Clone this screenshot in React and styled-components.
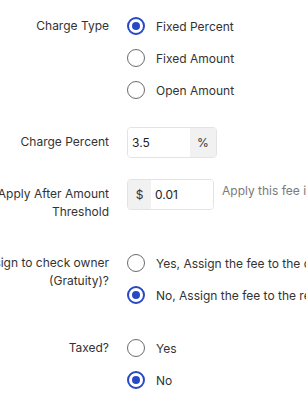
import React from "react";
import styled, { createGlobalStyle } from "styled-components";

const GlobalStyle = createGlobalStyle`
  html, body {
    margin: 0;
    padding: 0;
    background: #ffffff;
    overflow: hidden;
  }
  body {
    font-family: "Inter", "Liberation Sans", sans-serif;
    color: #333333;
  }
`;

const Form = styled.div`
  width: 400px;
  margin-left: -31px;
  padding-top: 10px;
`;

const Group = styled.div`
  display: flex;
  align-items: flex-start;
  margin-bottom: ${(p) => p.$gap || 21}px;
`;

const Label = styled.div`
  width: 140px;
  flex-shrink: 0;
  text-align: right;
  font-size: 12px;
  line-height: 18px;
  padding-top: ${(p) => p.$top || 7}px;
  margin-right: 18px;
  color: #333333;
`;

const Options = styled.div`
  display: flex;
  flex-direction: column;
`;

const Option = styled.label`
  display: flex;
  align-items: center;
  height: 32px;
  white-space: nowrap;
  font-size: 12px;
  color: #333333;
`;

const Ring = styled.span`
  width: 18px;
  height: 18px;
  box-sizing: border-box;
  border-radius: 50%;
  border: ${(p) => (p.$on ? "2px solid #2849c3" : "1.5px solid #6b6b6b")};
  display: flex;
  align-items: center;
  justify-content: center;
  margin-right: 11px;
  flex-shrink: 0;

  &::after {
    content: "";
    display: ${(p) => (p.$on ? "block" : "none")};
    width: 8px;
    height: 8px;
    border-radius: 50%;
    background: #2849c3;
  }
`;

const Field = styled.div`
  display: flex;
  align-items: flex-start;
  white-space: nowrap;
`;

const InputBox = styled.div`
  display: flex;
  height: 31px;
  box-sizing: border-box;
  border: 1px solid #e3e3e3;
  border-radius: 4px;
  overflow: hidden;
  font-size: 12px;
`;

const Value = styled.div`
  width: ${(p) => p.$w}px;
  box-sizing: border-box;
  display: flex;
  align-items: center;
  padding-left: 4px;
  background: #ffffff;
  color: #222222;
`;

const Addon = styled.div`
  width: ${(p) => p.$w}px;
  display: flex;
  align-items: center;
  justify-content: center;
  background: #f1f1f1;
  color: #333333;
`;

const Help = styled.div`
  margin-left: 8px;
  padding-top: 3px;
  font-size: 12px;
  line-height: 18px;
  color: #7a7a7a;
`;

const Radio = ({ on, children }) => (
  <Option>
    <Ring $on={on} />
    {children}
  </Option>
);

const App = () => (
  <>
    <GlobalStyle />
    <Form>
      <Group $gap={21}>
        <Label>Charge Type</Label>
        <Options>
          <Radio on>Fixed Percent</Radio>
          <Radio>Fixed Amount</Radio>
          <Radio>Open Amount</Radio>
        </Options>
      </Group>

      <Group>
        <Label $top={6}>Charge Percent</Label>
        <Field>
          <InputBox>
            <Value $w={62}>3.5</Value>
            <Addon $w={26}>%</Addon>
          </InputBox>
        </Field>
      </Group>

      <Group $gap={26}>
        <Label $top={6}>Apply After Amount Threshold</Label>
        <Field>
          <InputBox>
            <Addon $w={23}>$</Addon>
            <Value $w={62}>0.01</Value>
          </InputBox>
          <Help>Apply this fee if the check subtotal exceeds this amount</Help>
        </Field>
      </Group>

      <Group>
        <Label>Assign to check owner (Gratuity)?</Label>
        <Options>
          <Radio>Yes, Assign the fee to the check owner</Radio>
          <Radio on>No, Assign the fee to the restaurant</Radio>
        </Options>
      </Group>

      <Group>
        <Label>Taxed?</Label>
        <Options>
          <Radio>Yes</Radio>
          <Radio on>No</Radio>
        </Options>
      </Group>
    </Form>
  </>
);

export default App;
